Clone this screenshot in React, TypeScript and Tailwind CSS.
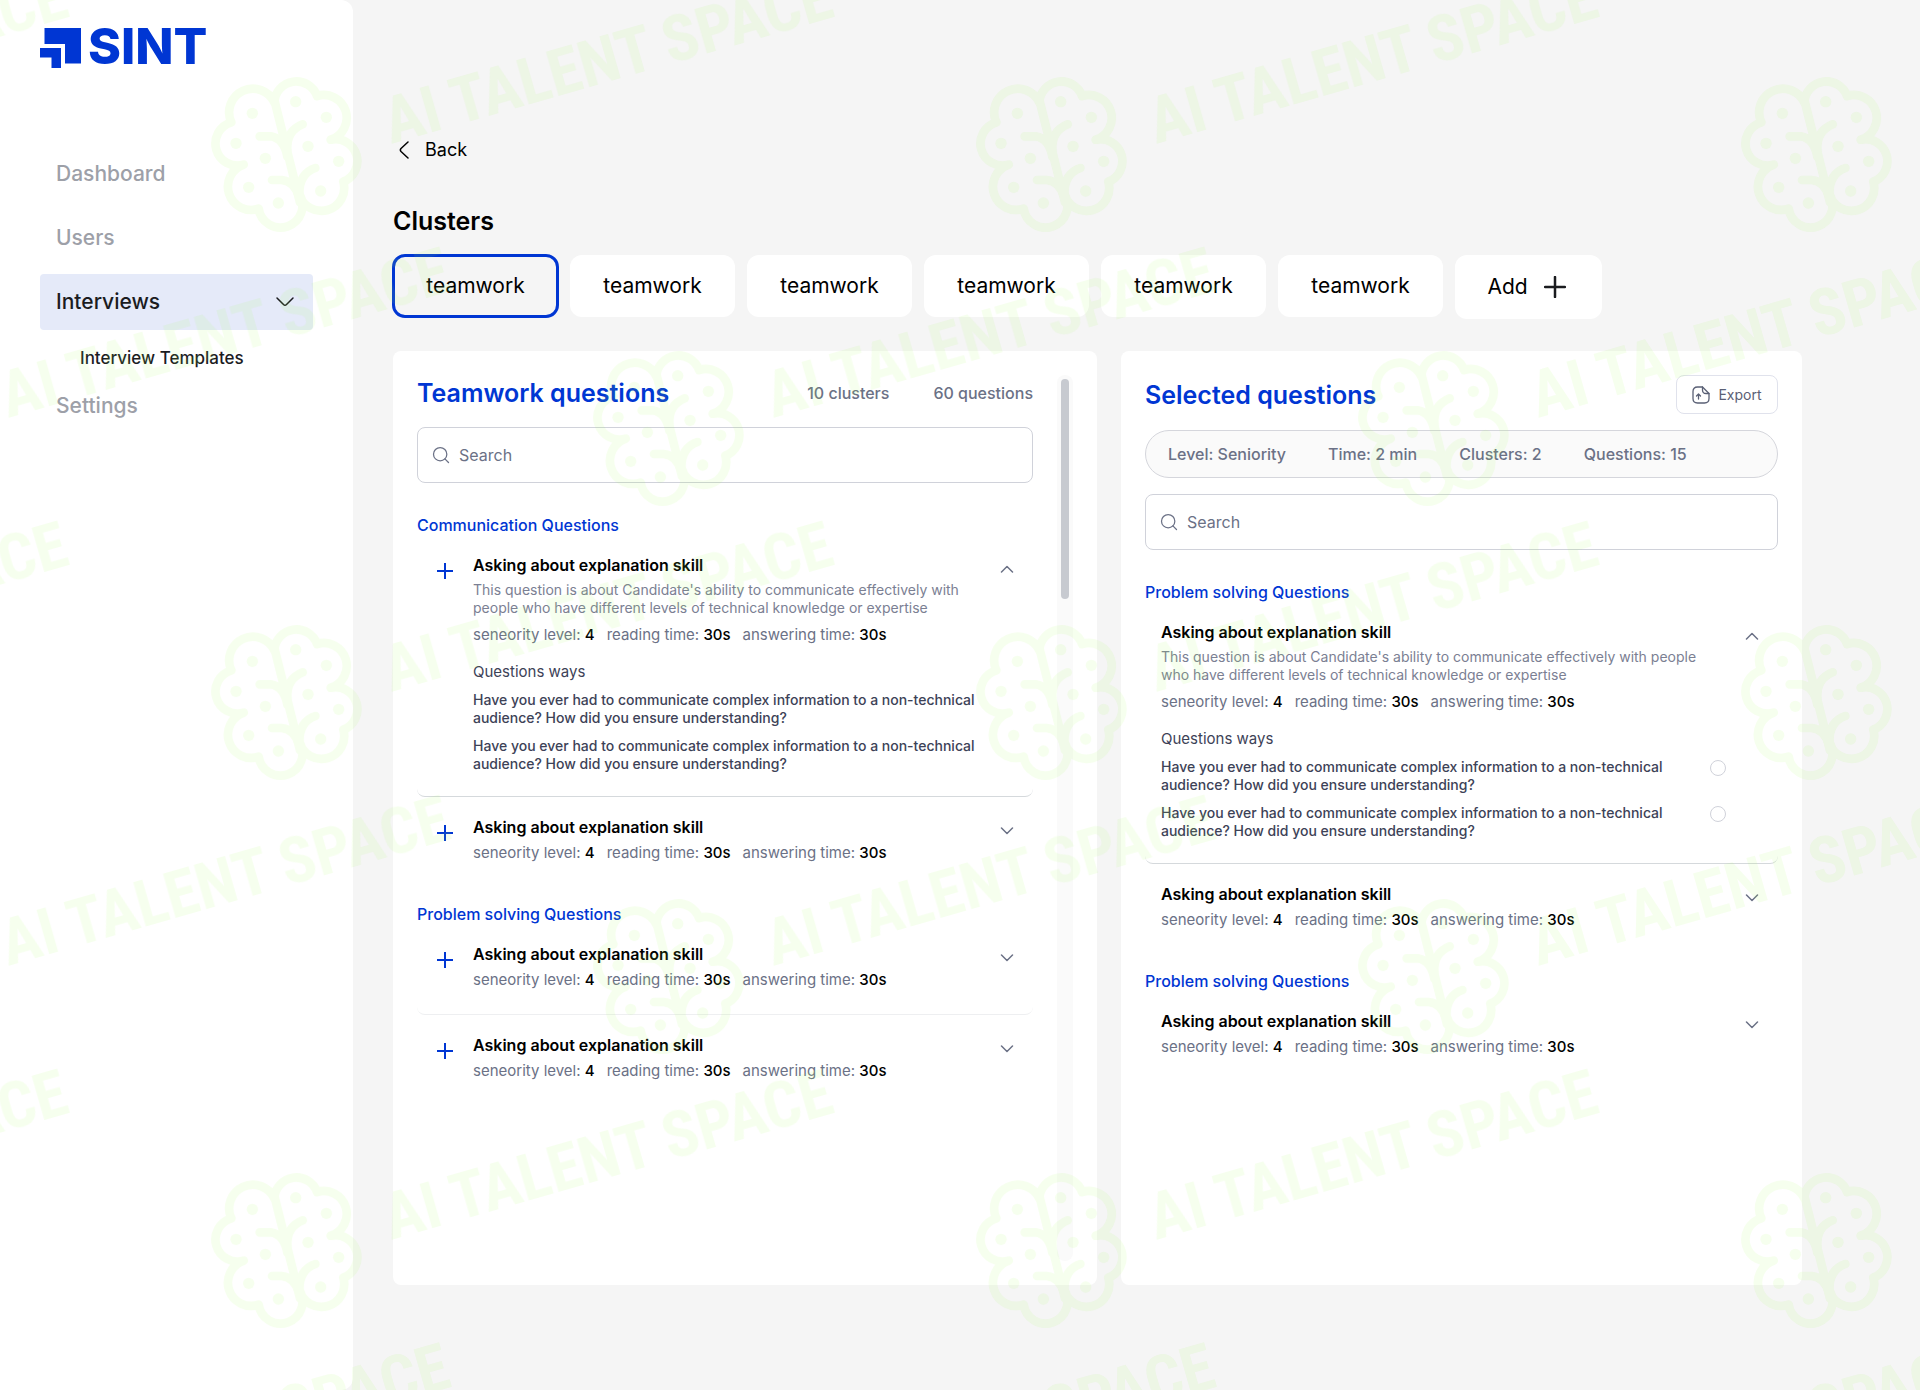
import React from 'react';
import { Search } from 'lucide-react';

interface Question {
  id: string;
  open?: boolean;
  divider?: 'strong' | 'soft';
}

interface Section {
  title: string;
  questions: Question[];
}

const clusters = ['teamwork', 'teamwork', 'teamwork', 'teamwork', 'teamwork', 'teamwork'];

const teamworkSections: Section[] = [
  {
    title: 'Communication Questions',
    questions: [{ id: 't1', open: true, divider: 'strong' }, { id: 't2' }],
  },
  {
    title: 'Problem solving Questions',
    questions: [{ id: 't3', divider: 'soft' }, { id: 't4' }],
  },
];

const selectedSections: Section[] = [
  {
    title: 'Problem solving Questions',
    questions: [{ id: 's1', open: true, divider: 'strong' }, { id: 's2' }],
  },
  { title: 'Problem solving Questions', questions: [{ id: 's3' }] },
];

const WAYS = [
  'Have you ever had to communicate complex information to a non-technical audience? How did you ensure understanding?',
  'Have you ever had to communicate complex information to a non-technical audience? How did you ensure understanding?',
];

const Logo = () => (
  <svg className="h-11 w-44 overflow-visible" viewBox="0 0 176 44" fill="#0036d3" role="img" aria-label="SINT">
    <path d="M4.500 2H41v35.500H25V18H4.500z" />
    <path d="M0 22h21v20H11.500V31.500H0z" />
    <text x="48" y="38" fontSize="50" fontWeight="800" fontFamily="Inter, sans-serif">SINT</text>
  </svg>
);

const Chevron = ({ up = false }: { up?: boolean }) => (
  <svg width="14" height="8" viewBox="0 0 14 8" fill="none" stroke="currentColor" strokeWidth="1.500" strokeLinecap="round" strokeLinejoin="round">
    <path d={up ? 'M1.500 7 7 1.500 12.500 7' : 'M1.500 1 7 6.500 12.500 1'} />
  </svg>
);

const ExportIcon = () => (
  <svg width="18" height="18" viewBox="0 0 18 18" fill="none" stroke="currentColor" strokeWidth="1.300" strokeLinecap="round" strokeLinejoin="round">
    <path d="M10.500 1H5.500Q1 1 1 5.500v7Q1 17 5.500 17h7q4.500 0 4.500-4.500V7.500z" />
    <path d="M10.500 1v3q0 3.500 3.500 3.500h3M6.500 13V8.500M4.500 10l2-2 2 2" />
  </svg>
);

const Mark = ({ x, y }: { x: number; y: number }) => (
  <g transform={`translate(${x} ${y})`}>
    <g transform="scale(0.3333) translate(-264 -261)">
      <g fill="none" stroke="#a5ff55" strokeWidth="26" strokeLinecap="round" strokeLinejoin="round">
        <path d="M223 112A66 66 0 0 1 351 93A68 68 0 0 1 392 224A66 66 0 0 1 430 350A66 66 0 1 1 298 388A66 66 0 1 1 176 431A63 63 0 1 1 131 299A62 62 0 1 1 94 172A62 62 0 1 1 223 112" />
        <path d="M223 105L300 412" />
        <path d="M179 214H212Q252 220 262 275M216 345H245Q285 350 297 395" />
        <path d="M308 178Q258 198 262 255M346 309Q298 325 298 385" />
      </g>
      <g fill="#a5ff55">
        <circle cx="157" cy="145" r="17" />
        <circle cx="287" cy="110" r="17" />
        <circle cx="379" cy="157" r="17" />
        <circle cx="108" cy="235" r="17" />
        <circle cx="196" cy="280" r="17" />
        <circle cx="324" cy="244" r="17" />
        <circle cx="416" cy="289" r="17" />
        <circle cx="146" cy="367" r="17" />
        <circle cx="235" cy="414" r="17" />
        <circle cx="362" cy="378" r="17" />
      </g>
    </g>
    <text
      transform="translate(103 -8) rotate(-16)"
      fill="#a5ff55"
      fontSize="65"
      fontWeight="700"
      fontFamily="'Roboto Condensed', 'Open Sans Condensed', 'Liberation Sans', sans-serif"
    >
      AI TALENT SPACE
    </text>
  </g>
);

// Brand marks repeat over the page, every other row shifted by half a step
const Watermark = () => (
  <svg className="pointer-events-none absolute inset-0 h-full w-full" aria-hidden="true">
    <g opacity="0.1">
      {[0, 1, 2, 3, 4, 5].map(row =>
        [-1, 0, 1, 2].map(col => (
          <Mark key={`${row}-${col}`} x={288 + col * 765 + (row % 2) * 382} y={152 + row * 274} />
        ))
      )}
    </g>
  </svg>
);

const Sidebar = () => (
  <aside className="w-[353px] shrink-0 rounded-r-xl bg-white px-10 pt-[26px]">
    <Logo />
    <nav className="mt-[76px] flex w-[273px] flex-col gap-2 text-[21px] font-medium text-[#9da0a8]">
      <a href="#dashboard" className="flex h-14 items-center px-4">Dashboard</a>
      <a href="#users" className="flex h-14 items-center px-4">Users</a>
      <a href="#interviews" className="flex h-14 items-center justify-between rounded bg-[#e5eaf9] px-4 text-[#1b1c1f]">
        Interviews
        <svg width="24" height="12" viewBox="0 0 24 12" fill="none" stroke="currentColor" strokeWidth="1.500" strokeLinecap="round" strokeLinejoin="round">
          <path d="M4 2l6.500 6.500q1.500 1.500 3 0L20 2" />
        </svg>
      </a>
      <a href="#templates" className="px-10 pt-2 text-[17px] leading-6 text-[#1b1c1f]">Interview Templates</a>
      <a href="#settings" className="flex h-14 items-center px-4">Settings</a>
    </nav>
  </aside>
);

const SearchBox = ({ id }: { id: string }) => (
  <label htmlFor={id} className="flex h-14 items-center gap-2 rounded-lg border border-[#d0d2da] px-[13px] text-[#6b7186]">
    <Search size={20} strokeWidth={1.5} />
    <input
      id={id}
      type="text"
      aria-label="Search"
      placeholder="Search"
      className="min-w-0 flex-1 bg-transparent text-base outline-none placeholder:text-[#6b7186]"
    />
  </label>
);

const Meta = () => (
  <p className="flex gap-3 text-[15px] leading-5 text-[#6b7186]">
    <span>seneority level: <b className="font-medium text-black">4</b></span>
    <span>reading time: <b className="font-medium text-black">30s</b></span>
    <span>answering time: <b className="font-medium text-black">30s</b></span>
  </p>
);

const QuestionRow = ({ question, selectable }: { question: Question; selectable: boolean }) => {
  const border =
    question.divider === 'strong'
      ? 'border-b border-[#d5d9dc]'
      : question.divider === 'soft'
        ? 'border-b border-[#eeeff1]'
        : '';
  return (
    <li className={`flex items-start rounded-b-lg pt-5 pr-3.5 ${question.open ? 'pb-[23px]' : 'pb-6'} ${selectable ? 'pl-4' : 'pl-5'} ${border}`}>
      {!selectable && (
        <button aria-label="Add question" className="mt-2 mr-5 text-[#0036d3]">
          <svg width="16" height="16" viewBox="0 0 16 16" stroke="currentColor" strokeWidth="2">
            <path d="M8 0v16M0 8h16" />
          </svg>
        </button>
      )}
      <div className="min-w-0 flex-1">
        <h4 className="text-base leading-5 font-semibold text-black">Asking about explanation skill</h4>
        {question.open && (
          <p className="mt-1.5 mb-2 max-w-[550px] text-sm leading-[18px] text-[#7b8093]">
            This question is about Candidate's ability to communicate effectively with people who have different levels of technical knowledge or expertise
          </p>
        )}
        <div className={question.open ? '' : 'mt-1.5'}>
          <Meta />
        </div>
        {question.open && (
          <>
            <h5 className="mt-[17px] mb-[9px] text-[15px] leading-5 text-[#3d4257]">Questions ways</h5>
            <div className="flex flex-col gap-2.5">
              {WAYS.map((way, i) =>
                selectable ? (
                  <label key={i} className="flex items-start justify-between pr-0.5 text-sm leading-[18px] font-medium text-[#3d4257]">
                    <span className="max-w-[515px]">{way}</span>
                    <input
                      type="radio"
                      name={question.id}
                      className="mt-0.5 size-4 shrink-0 appearance-none rounded-full border border-[#d0d2da] checked:border-4 checked:border-[#0036d3]"
                    />
                  </label>
                ) : (
                  <p key={i} className="text-sm leading-[18px] font-medium text-[#3d4257]">{way}</p>
                )
              )}
            </div>
          </>
        )}
      </div>
      <button aria-label={question.open ? 'Collapse' : 'Expand'} className="mt-0.5 ml-3 flex size-6 items-center justify-center text-[#6b7186]">
        <Chevron up={question.open} />
      </button>
    </li>
  );
};

const SectionList = ({ sections, selectable }: { sections: Section[]; selectable: boolean }) => (
  <div className="mt-8 flex flex-col gap-[17px]">
    {sections.map((section, i) => (
      <section key={i}>
        <h3 className="text-base leading-5 font-medium text-[#0036d3]">{section.title}</h3>
        <ul>
          {section.questions.map(q => (
            <QuestionRow key={q.id} question={q} selectable={selectable} />
          ))}
        </ul>
      </section>
    ))}
  </div>
);

const App: React.FC = () => {
  return (
    <div className="relative flex min-h-screen bg-[#f5f5f5] font-['Inter',sans-serif] text-black">
      <Sidebar />
      <main className="min-w-0 flex-1 pt-[134px] pr-[118px] pb-[105px] pl-10">
        <button className="flex h-8 items-center gap-4 px-1.5 text-lg">
          <svg width="10" height="18" viewBox="0 0 10 18" fill="none" stroke="currentColor" strokeWidth="1.500" strokeLinecap="round" strokeLinejoin="round">
            <path d="M9 1L2 7.500q-1.300 1.500 0 3L9 17" />
          </svg>
          Back
        </button>

        <h1 className="mt-[39px] text-[25px] leading-8 font-semibold">Clusters</h1>
        <div className="mt-[18px] flex items-start gap-3">
          {clusters.map((name, i) => (
            <button
              key={i}
              className={`h-[62px] w-[165px] rounded-xl text-[21px] ${
                i === 0 ? 'outline-3 -outline-offset-2 outline-[#0036d3]' : 'bg-white'
              }`}
            >
              {name}
            </button>
          ))}
          <button className="flex h-16 w-[147px] items-center justify-center gap-4 rounded-xl bg-white pr-1 text-[21px]">
            Add
            <svg width="22" height="22" viewBox="0 0 22 22" stroke="#1b1c1f" strokeWidth="2.500" strokeLinecap="round">
              <path d="M11 1v20M1 11h20" />
            </svg>
          </button>
        </div>

        <div className="mt-8 grid min-h-[934px] grid-cols-[704fr_681fr] gap-6">
          <section className="flex gap-6 rounded-lg bg-white p-6">
            <div className="min-w-0 flex-1">
              <div className="flex h-9 items-center gap-11 font-medium text-[#6b7186]">
                <h2 className="mr-auto text-[25px] leading-9 font-semibold text-[#0036d3]">Teamwork questions</h2>
                <span>10 clusters</span>
                <span>60 questions</span>
              </div>
              <div className="mt-4">
                <SearchBox id="search-teamwork" />
              </div>
              <SectionList sections={teamworkSections} selectable={false} />
            </div>
            <div className="w-4 rounded-full bg-[#fafafa] p-1">
              <div className="h-[220px] rounded-full bg-[#c7cad0]" />
            </div>
          </section>

          <section className="rounded-lg bg-white p-6">
            <div className="flex h-[39px] items-center justify-between">
              <h2 className="text-[25px] leading-9 font-semibold text-[#0036d3]">Selected questions</h2>
              <button className="flex h-[39px] w-[102px] items-center justify-center gap-2 rounded-lg border border-[#e0e2ec] text-sm text-[#5a6075]">
                <ExportIcon />
                Export
              </button>
            </div>
            <div className="mt-4 mb-4 flex h-12 items-center gap-[42px] rounded-full border border-[#d5d6dc] bg-[#fafafa] px-[22px] font-medium text-[#6b7186]">
              <span>Level: Seniority</span>
              <span>Time: 2 min</span>
              <span>Clusters: 2</span>
              <span>Questions: 15</span>
            </div>
            <SearchBox id="search-selected" />
            <SectionList sections={selectedSections} selectable />
          </section>
        </div>
      </main>
      <Watermark />
    </div>
  );
};

export default App;
